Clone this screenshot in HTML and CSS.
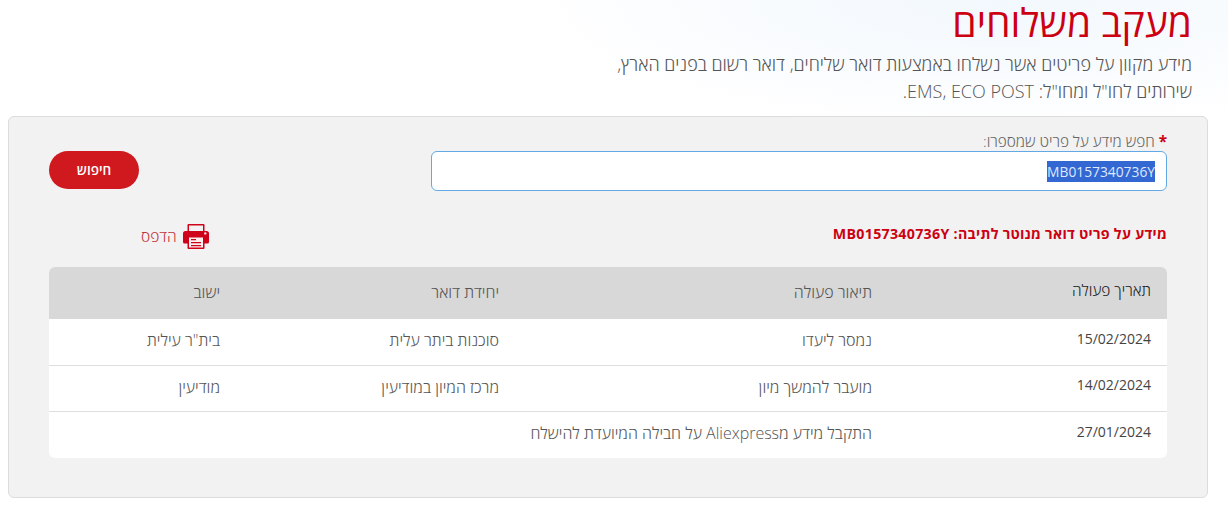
FILE: index.html
```html
<!DOCTYPE html>
<html lang="he" dir="rtl">
<head>
    <meta charset="UTF-8">
    <title>מעקב משלוחים</title>
    <link rel="stylesheet" href="styles.css">
</head>
<body>

    <!-- Page header -->
    <div class="page-head">
        <h1>מעקב משלוחים</h1>
        <p>מידע מקוון על פריטים אשר נשלחו באמצעות דואר שליחים, דואר רשום בפנים הארץ,<br>שירותים לחו"ל ומחו"ל: EMS, ECO POST.</p>
    </div>

    <!-- Tracking panel -->
    <div class="panel">
        <div class="search-row">
            <div class="field">
                <label class="field-label"><span class="req">*</span> חפש מידע על פריט שמספרו:</label>
                <div class="input-box"><span class="selected-text">MB0157340736Y</span></div>
            </div>
            <button class="search-btn">חיפוש</button>
        </div>

        <div class="result-row">
            <div class="result-title">מידע על פריט דואר מנוטר לתיבה: MB0157340736Y</div>
            <a class="print-link">
                <svg class="print-icon" viewBox="0 0 26 26" width="26" height="26">
                    <path d="M4.500 9V2a1 1 0 0 1 1-1h15a1 1 0 0 1 1 1v7h-1.500V2.500h-14V9z" fill="#d0021b"/>
                    <path d="M2.500 8h21a2.500 2.500 0 0 1 2.500 2.500V19a1.500 1.500 0 0 1-1.500 1.500H21V13H5v7.500H1.500A1.500 1.500 0 0 1 0 19v-8.500A2.500 2.500 0 0 1 2.500 8z" fill="#d0021b"/>
                    <circle cx="22.300" cy="10.400" r="1.200" fill="#f7dfe0"/>
                    <path d="M4.500 13h17v12a1 1 0 0 1-1 1h-15a1 1 0 0 1-1-1z" fill="#d0021b"/>
                    <path d="M6 14.500h14v10H6z" fill="#fbeeee"/>
                    <path d="M8 16h5v1.200H8zM8 19h10v1.200H8zM8 22h10v1.200H8z" fill="#d0021b"/>
                </svg>
                <span>הדפס</span>
            </a>
        </div>

        <table class="track-table">
            <thead>
                <tr>
                    <th class="col-date">תאריך פעולה</th>
                    <th class="col-desc">תיאור פעולה</th>
                    <th class="col-unit">יחידת דואר</th>
                    <th class="col-city">ישוב</th>
                </tr>
            </thead>
            <tbody>
                <tr>
                    <td class="cell-date">15/02/2024</td>
                    <td>נמסר ליעדו</td>
                    <td>סוכנות ביתר עלית</td>
                    <td>בית"ר עילית</td>
                </tr>
                <tr>
                    <td class="cell-date">14/02/2024</td>
                    <td>מועבר להמשך מיון</td>
                    <td>מרכז המיון במודיעין</td>
                    <td>מודיעין</td>
                </tr>
                <tr class="last-row">
                    <td class="cell-date">27/01/2024</td>
                    <td colspan="3">התקבל מידע מAliexpress על חבילה המיועדת להישלח</td>
                </tr>
            </tbody>
        </table>
    </div>

</body>
</html>
```

FILE: styles.css
```css
/* General styles */
body {
    font-family: "Open Sans", "Noto Sans", sans-serif;
    margin: 0;
    padding: 0 20px 0 8px;
    height: 507px;
    overflow: hidden;
    color: #666;
    background: #fff radial-gradient(ellipse 480px 130px at 1000px 0, #f2f8fd 0%, #fafcfe 65%, #fff 100%) no-repeat;
}

/* Page header */
.page-head {
    height: 116px;
    padding-right: 16px;
    box-sizing: border-box;
}

.page-head h1 {
    margin: 0;
    padding-top: 1px;
    font-size: 39px;
    line-height: 42px;
    font-weight: 400;
    color: #cc0011;
}

.page-head p {
    margin: 8px 0 0;
    font-size: 18px;
    line-height: 27px;
    font-weight: 300;
    color: #555;
}

/* Panel */
.panel {
    background-color: #f2f2f2;
    border: 1px solid #dcdcdc;
    border-radius: 6px;
    height: 382px;
    box-sizing: border-box;
    padding: 14px 40px 0;
}

.search-row {
    display: flex;
    justify-content: space-between;
    align-items: flex-start;
}

.field {
    width: 736px;
}

.field-label {
    display: block;
    font-size: 15.300px;
    line-height: 20px;
    font-weight: 300;
    color: #666;
}

.req {
    color: #cc0011;
    font-weight: 700;
}

.input-box {
    box-sizing: border-box;
    height: 40px;
    background-color: #fff;
    border: 1px solid #62a9e6;
    border-radius: 6px;
    padding: 0 11px;
    display: flex;
    align-items: center;
    font-size: 13.800px;
}

.selected-text {
    background-color: #3367d1;
    color: #dfe9ff;
    line-height: 21px;
    direction: ltr;
}

.search-btn {
    width: 90px;
    height: 38px;
    margin-top: 20px;
    background-color: #d0191f;
    color: #fff;
    border: none;
    border-radius: 19px;
    font-family: inherit;
    font-size: 13.500px;
    font-weight: 600;
    cursor: pointer;
}

/* Result title + print */
.result-row {
    display: flex;
    justify-content: space-between;
    align-items: center;
    height: 28px;
    margin-top: 31px;
    margin-bottom: 17px;
}

.result-title {
    font-size: 14.200px;
    font-weight: 700;
    color: #cc0011;
    letter-spacing: 0.300px;
    padding-bottom: 6px;
}

.print-link {
    display: flex;
    align-items: center;
    gap: 6px;
    margin-left: 92px;
    font-size: 15.500px;
    font-weight: 300;
    color: #c4343c;
}

/* Tracking table */
.track-table {
    width: 100%;
    border-collapse: separate;
    border-spacing: 0;
    table-layout: fixed;
    background-color: #fff;
    border-radius: 6px;
    overflow: hidden;
    font-size: 16px;
    font-weight: 300;
}

.track-table th {
    height: 52px;
    padding: 0 16px 2px 0;
    background-color: #d8d8d8;
    font-weight: 300;
    text-align: right;
    color: #555;
    box-sizing: border-box;
}

.track-table th.col-date {
    color: #222;
    font-size: 15.400px;
    padding-bottom: 6px;
}

.col-date { width: 279px; }
.col-desc { width: 373px; }
.col-unit { width: 279px; }

.track-table td {
    height: 46px;
    padding: 0 16px 4px 0;
    border-top: 1px solid #dedede;
    box-sizing: border-box;
    color: #555;
}

.track-table tbody tr:first-child td {
    border-top: none;
}

.track-table .last-row td {
    height: 47px;
}

.track-table td.cell-date {
    color: #444;
    font-size: 14px;
    font-weight: 400;
    padding-bottom: 8px;
}
```
